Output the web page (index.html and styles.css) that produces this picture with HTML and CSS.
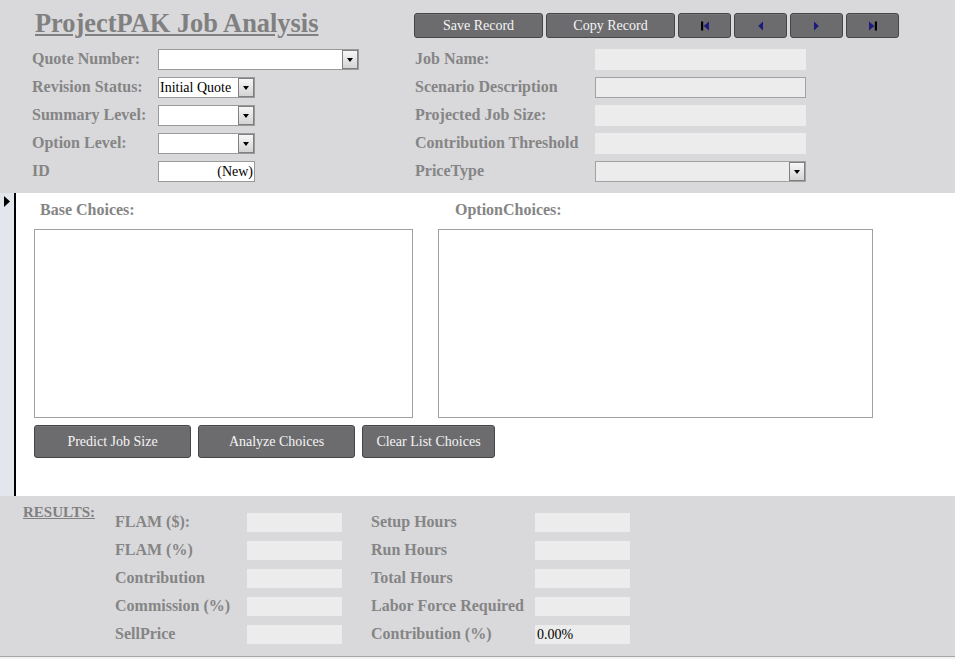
FILE: index.html
```html
<!DOCTYPE html>
<html>
<head>
<meta charset="utf-8">
<title>ProjectPAK Job Analysis</title>
<link rel="stylesheet" href="styles.css">
</head>
<body>
<div class="page">
  <header class="header">
    <div class="hleft">
      <h1 class="title">ProjectPAK Job Analysis</h1>
      <div class="row"><span class="lbl">Quote Number:</span><div class="field w201"><span class="val"></span><span class="arrow"></span></div></div>
      <div class="row"><span class="lbl">Revision Status:</span><div class="field w97"><span class="val">Initial Quote</span><span class="arrow"></span></div></div>
      <div class="row"><span class="lbl">Summary Level:</span><div class="field w97"><span class="val"></span><span class="arrow"></span></div></div>
      <div class="row"><span class="lbl">Option Level:</span><div class="field w97"><span class="val"></span><span class="arrow"></span></div></div>
      <div class="row"><span class="lbl">ID</span><div class="field w97"><span class="val right">(New)</span></div></div>
    </div>
    <div class="hright">
      <div class="toolbar">
        <div class="btn tb-wide">Save Record</div>
        <div class="btn tb-wide">Copy Record</div>
        <div class="btn tb-nav"><svg width="10" height="10" viewBox="0 0 10 10"><rect x="1" y="0.5" width="2.2" height="9" fill="#000"/><polygon points="9,0.5 9,9.5 3.6,5" fill="#1c1c7c"/></svg></div>
        <div class="btn tb-nav"><svg width="7" height="10" viewBox="0 0 7 10"><polygon points="6,0.5 6,9.5 1.2,5" fill="#1c1c7c"/></svg></div>
        <div class="btn tb-nav"><svg width="7" height="10" viewBox="0 0 7 10"><polygon points="1,0.5 1,9.5 5.8,5" fill="#1c1c7c"/></svg></div>
        <div class="btn tb-nav"><svg width="10" height="10" viewBox="0 0 10 10"><polygon points="1,0.5 1,9.5 6.4,5" fill="#1c1c7c"/><rect x="6.8" y="0.5" width="2.2" height="9" fill="#000"/></svg></div>
      </div>
      <div class="row"><span class="lbl">Job Name:</span><div class="field ro w211"><span class="val"></span></div></div>
      <div class="row"><span class="lbl">Scenario Description</span><div class="field ro bordered w211"><span class="val"></span></div></div>
      <div class="row"><span class="lbl">Projected Job Size:</span><div class="field ro w211"><span class="val"></span></div></div>
      <div class="row"><span class="lbl">Contribution Threshold</span><div class="field ro w211"><span class="val"></span></div></div>
      <div class="row"><span class="lbl">PriceType</span><div class="field ro bordered w211"><span class="val"></span><span class="arrow"></span></div></div>
    </div>
  </header>

  <section class="detail">
    <div class="selector"><svg width="6" height="11" viewBox="0 0 6 11"><polygon points="0,0 6,5.5 0,11" fill="#000"/></svg></div>
    <div class="dcontent">
      <div class="lists">
        <div class="listcol base">
          <div class="ltitle">Base Choices:</div>
          <div class="listbox"></div>
        </div>
        <div class="listcol opt">
          <div class="ltitle">OptionChoices:</div>
          <div class="listbox"></div>
        </div>
      </div>
      <div class="actions">
        <div class="btn abtn w157">Predict Job Size</div>
        <div class="btn abtn w157">Analyze Choices</div>
        <div class="btn abtn w133">Clear List Choices</div>
      </div>
    </div>
  </section>

  <footer class="results">
    <div class="res-title">RESULTS:</div>
    <div class="res-grid">
      <span class="rl">FLAM ($):</span><div class="cell"><div class="rf"></div></div>
      <span class="rl">Setup Hours</span><div class="cell"><div class="rf"></div></div>
      <span class="rl">FLAM (%)</span><div class="cell"><div class="rf"></div></div>
      <span class="rl">Run Hours</span><div class="cell"><div class="rf"></div></div>
      <span class="rl">Contribution</span><div class="cell"><div class="rf"></div></div>
      <span class="rl">Total Hours</span><div class="cell"><div class="rf"></div></div>
      <span class="rl">Commission (%)</span><div class="cell"><div class="rf"></div></div>
      <span class="rl">Labor Force Required</span><div class="cell"><div class="rf"></div></div>
      <span class="rl">SellPrice</span><div class="cell"><div class="rf"></div></div>
      <span class="rl">Contribution (%)</span><div class="cell"><div class="rf">0.00%</div></div>
    </div>
  </footer>
  <div class="status"></div>
</div>
</body>
</html>
```

FILE: styles.css
```css
* {
  box-sizing: border-box;
  margin: 0;
  padding: 0;
}

body {
  width: 955px;
  height: 659px;
  overflow: hidden;
  background: #ffffff;
  font-family: "Liberation Serif", "Times New Roman", serif;
}

.page {
  width: 955px;
  height: 659px;
  display: flex;
  flex-direction: column;
}

/* ---------- header ---------- */
.header {
  height: 193px;
  flex: none;
  background: #d9d9dc;
  display: flex;
  padding-left: 32px;
}

.hleft {
  width: 382px;
}

.title {
  margin: 8px 0 11px 3px;
  font-size: 26.4px;
  line-height: 30px;
  font-weight: bold;
  color: #808080;
  text-decoration: underline;
  white-space: nowrap;
}

.row {
  display: flex;
  align-items: flex-start;
  height: 28px;
}

.lbl {
  font-size: 16px;
  font-weight: bold;
  color: #858585;
  line-height: 19px;
  white-space: nowrap;
}

.hleft .lbl {
  width: 126px;
}

.hright .lbl {
  width: 181px;
  padding-left: 1px;
}

.field {
  height: 21px;
  display: flex;
  background: #ffffff;
  border: 1px solid #9a9a9a;
  font-size: 14px;
  line-height: 19px;
  color: #000000;
}

.field .val {
  flex: 1;
  padding-left: 1px;
  overflow: hidden;
  white-space: nowrap;
}

.field .val.right {
  text-align: right;
  padding-right: 1px;
}

.w201 { width: 201px; }
.w97 { width: 97px; }
.w211 { width: 211px; }

.field.ro {
  background: #ececec;
  border-color: transparent;
}

.field.ro.bordered {
  border-color: #a2a2a2;
}

.arrow {
  width: 16px;
  height: 19px;
  flex: none;
  border: 1px solid #7f7f7f;
  background: linear-gradient(#f7f7f7, #d4d4d4);
  display: flex;
  align-items: center;
  justify-content: center;
}

.arrow::after {
  content: "";
  border-left: 3.5px solid transparent;
  border-right: 3.5px solid transparent;
  border-top: 4px solid #000000;
  margin-top: 1px;
}

/* ---------- buttons ---------- */
.toolbar {
  display: flex;
  gap: 3px;
  height: 25px;
  margin: 13px 0 11px;
}

.btn {
  background: #6c6c6f;
  border: 1px solid #454548;
  border-radius: 3px;
  color: #f4f4f4;
  font-size: 14px;
  display: flex;
  align-items: center;
  justify-content: center;
  white-space: nowrap;
  box-shadow: inset 0 1px 0 rgba(255, 255, 255, 0.08);
}

.tb-wide { width: 129px; }
.tb-nav { width: 53px; }

/* ---------- detail ---------- */
.detail {
  height: 303px;
  flex: none;
  display: flex;
  background: #ffffff;
}

.selector {
  width: 16px;
  flex: none;
  background: #e3e6ec;
  border-right: 2px solid #000000;
  padding: 3px 0 0 4px;
}

.selector svg {
  display: block;
}

.dcontent {
  flex: 1;
  padding: 7px 0 0 18px;
}

.lists {
  display: flex;
  gap: 25px;
}

.base { width: 379px; }
.opt { width: 435px; }

.ltitle {
  font-size: 16px;
  font-weight: bold;
  color: #858585;
  line-height: 20px;
  margin-bottom: 9px;
  white-space: nowrap;
}

.base .ltitle { padding-left: 6px; }
.opt .ltitle { padding-left: 17px; }

.listbox {
  height: 189px;
  border: 1px solid #a0a0a0;
  background: #ffffff;
}

.actions {
  display: flex;
  gap: 7px;
  margin-top: 7px;
}

.abtn { height: 33px; }
.w157 { width: 157px; }
.w133 { width: 133px; }

/* ---------- results ---------- */
.results {
  height: 160px;
  flex: none;
  background: #d9d9dc;
  display: flex;
  padding: 7px 0 0 23px;
}

.res-title {
  width: 92px;
  font-size: 15px;
  font-weight: bold;
  color: #808080;
  text-decoration: underline;
  line-height: 18px;
}

.res-grid {
  display: grid;
  grid-template-columns: 132px 124px 164px 95px;
  grid-auto-rows: 28px;
  padding-top: 10px;
}

.rl {
  font-size: 16px;
  font-weight: bold;
  color: #858585;
  line-height: 18px;
  white-space: nowrap;
}

.rf {
  width: 95px;
  height: 19px;
  background: #ececec;
  font-size: 14px;
  line-height: 19px;
  padding-left: 2px;
  color: #000000;
}

.status {
  height: 3px;
  flex: none;
  border-top: 1px solid #a6a6a6;
  background: #f2f2f2;
}
```
